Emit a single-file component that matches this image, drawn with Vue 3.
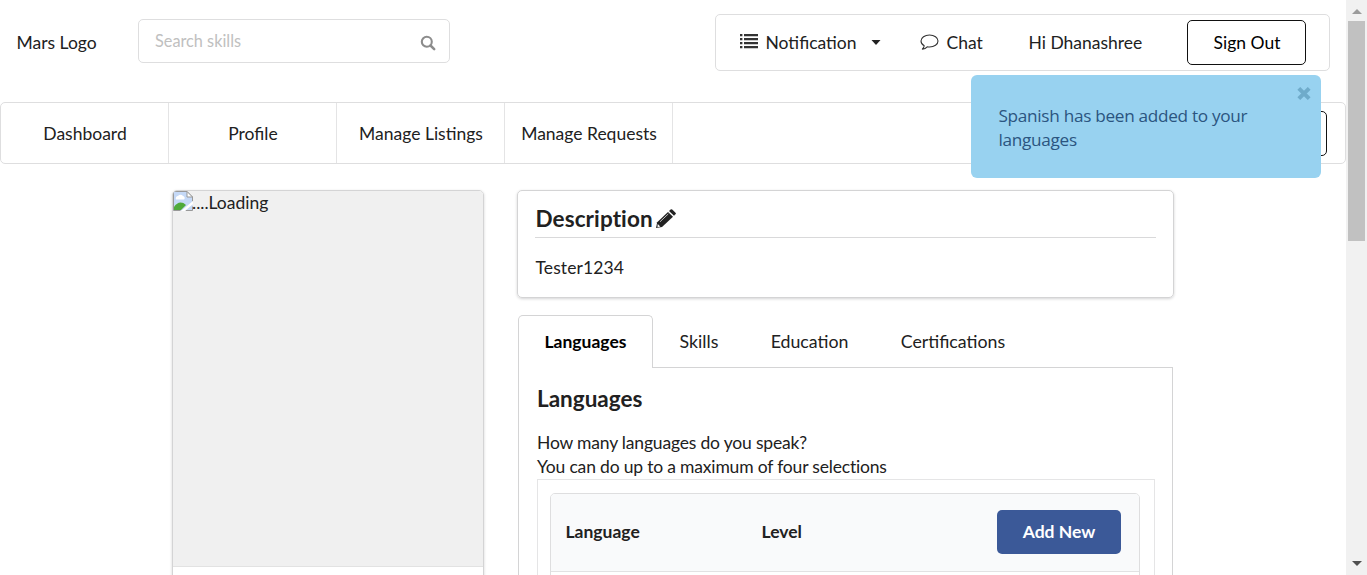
<script setup>
const navItems = ['Dashboard', 'Profile', 'Manage Listings', 'Manage Requests']
const tabs = ['Languages', 'Skills', 'Education', 'Certifications']
const activeTab = 'Languages'
</script>

<template>
  <div class="window">
    <main class="page">
      <header class="top">
        <span class="logo">Mars Logo</span>
        <div class="search">
          <span>Search skills</span>
          <svg width="16" height="16" viewBox="0 0 16 16" fill="none" stroke="#8c8c8c">
            <circle cx="6.8" cy="6.8" r="5" stroke-width="2.1" />
            <path d="M10.5 10.5 14.2 14.2" stroke-width="2.5" stroke-linecap="round" />
          </svg>
        </div>
        <div class="account">
          <svg class="list-icon" width="18" height="15" viewBox="0 0 18 15" fill="#333">
            <path d="M0 0h2.400v2.300H0zM4 0h14v2.300H4zM0 4h2.400v2.300H0zM4 4h14v2.300H4zM0 8h2.400v2.300H0zM4 8h14v2.300H4zM0 12h2.400v2.300H0zM4 12h14v2.300H4z" />
          </svg>
          <span class="notification">Notification</span>
          <svg class="caret" width="10" height="5" viewBox="0 0 10 5" fill="#222"><path d="M.5 0h9L5 5z" /></svg>
          <svg class="chat-icon" width="19" height="17" viewBox="0 0 19 17" fill="none" stroke="#333" stroke-width="1.1" stroke-linejoin="round">
            <path d="M9.5 1C4.8 1 1 3.6 1 7c0 2 1.3 3.7 3.2 4.8-.2 1.5-.9 2.5-1.8 3.4 2-.2 3.6-1 4.8-2.4.7.1 1.5.2 2.3.2 4.700 0 8.500-2.600 8.500-6S14.200 1 9.500 1z" />
          </svg>
          <span class="chat">Chat</span>
          <span class="greeting">Hi Dhanashree</span>
          <button class="outline sign-out">Sign Out</button>
        </div>
      </header>

      <nav class="nav">
        <a v-for="item in navItems" :key="item">{{ item }}</a>
        <button class="outline share"></button>
      </nav>

      <div class="content">
        <aside class="profile">
          <div class="photo">
            <svg width="20" height="20" viewBox="0 0 20 20">
              <path d="M.5.5h13.500l5.500 5.500v13.500H.5z" fill="#c5d9f7" />
              <path d="M3 8.500a2.400 2.400 0 0 1 2-3.500 3 3 0 0 1 5 0 2 2 0 0 1 1 3.500z" fill="#fff" />
              <path d="M1 19v-3c3-5 8-6 12-2l-5 5z" fill="#4faa3b" />
              <path d="M.5 19.500V.5h13.500l5.500 5.500v4.500M.5 19.500h7M12.500 19.500h7v-4" fill="none" stroke="#999" />
              <path d="M14 .5v5.500h5.500z" fill="#fff" stroke="#999" />
              <path d="M8 20 20 10v3l-8 7z" fill="#fff" />
            </svg>
            <span>....Loading</span>
          </div>
        </aside>

        <div class="details">
          <section class="description">
            <h3>
              <span>Description</span>
              <svg width="20" height="19" viewBox="0 0 20 19" fill="#222">
                <path d="M0 19 1.200 13.300 12 3l5 4.800L6 18z" />
                <path d="M13 2 14.600.5q.8-.7 1.600 0L19.500 3.700q.8.800 0 1.600L18 6.800z" />
                <path d="m1.700 15 2.600 2.500-2.800.7z" fill="#fff" />
                <path d="M4 12.800 12.300 4.900" stroke="#fff" stroke-width=".7" />
              </svg>
            </h3>
            <p>Tester1234</p>
          </section>

          <div class="tabs">
            <a v-for="tab in tabs" :key="tab" :class="{ active: tab === activeTab }">{{ tab }}</a>
          </div>
          <section class="panel">
            <h3>Languages</h3>
            <p>How many languages do you speak?<br />You can do up to a maximum of four selections</p>
            <div class="table-wrap">
              <div class="table">
                <div class="row">
                  <span class="language">Language</span>
                  <span class="level">Level</span>
                  <button class="add">Add New</button>
                </div>
              </div>
            </div>
          </section>
        </div>
      </div>
    </main>

    <div class="scrollbar">
      <svg width="10" height="5" viewBox="0 0 10 5" fill="#9b9b9b"><path d="M0 5h10L5 0z" /></svg>
      <div class="thumb"></div>
      <svg class="down" width="10" height="5" viewBox="0 0 10 5" fill="#505050"><path d="M0 0h10L5 5z" /></svg>
    </div>

    <div class="toast">
      Spanish has been added to your languages
      <svg class="close" width="14" height="13" viewBox="0 0 14 13" stroke="#6fabca" stroke-width="4">
        <path d="M1.800 1.400 12.200 11.600M12.200 1.400 1.800 11.600" />
      </svg>
    </div>
  </div>
</template>

<style>
body {
  overflow: hidden;
}
</style>

<style scoped>
* {
  box-sizing: border-box;
}
.window {
  position: relative;
  display: flex;
  height: 575px;
  overflow: hidden;
  background: #fff;
  color: #212121;
  font: 17.5px/24px Lato, sans-serif;
}
.page {
  width: 1346px;
  flex: none;
}
svg {
  display: block;
  flex: none;
}
h3,
p {
  margin: 0;
}
button {
  font: inherit;
  padding: 0;
}
.top {
  display: flex;
  height: 102px;
}
.logo {
  margin: 31px 0 0;
  padding-left: 16.5px;
  width: 138px;
}
.search {
  display: flex;
  justify-content: space-between;
  align-items: center;
  width: 312px;
  height: 44px;
  margin-top: 19px;
  padding: 0 13px 0 16px;
  border: 1px solid #dededf;
  border-radius: 5px;
  color: #c0c0c0;
  font-size: 16.3px;
}
.search svg {
  margin-top: 4px;
}
.account {
  display: flex;
  align-items: center;
  width: 615px;
  height: 57px;
  margin: 14px 0 0 265px;
  padding-left: 24px;
  border: 1px solid #dededf;
  border-radius: 5px;
}
.list-icon {
  margin-top: -3px;
}
.notification {
  width: 106px;
  margin-left: 7.5px;
}
.caret {
  margin-left: -0.5px;
}
.chat-icon {
  margin-left: 39px;
}
.chat {
  width: 82px;
  margin-left: 7px;
  padding-left: 0.5px;
}
.greeting {
  width: 159px;
  padding-left: 0.5px;
}
.outline {
  height: 45px;
  background: #fff;
  border: 1px solid #111;
  border-radius: 5px;
  color: #000;
}
.sign-out {
  width: 119px;
  padding-left: 1px;
}
.nav {
  display: flex;
  align-items: center;
  height: 62px;
  padding-right: 18px;
  border: 1px solid #dededf;
  border-radius: 5px;
}
.nav a {
  display: flex;
  align-items: center;
  justify-content: center;
  width: 168px;
  height: 60px;
  padding: 2px 0 0 1px;
  border-right: 1px solid #e4e4e5;
}
.share {
  width: 119px;
  margin: 0 0 0 auto;
}
.content {
  display: flex;
  align-items: flex-start;
  gap: 33px;
  padding: 26px 0 0 172px;
}
.profile {
  width: 312px;
  height: 480px;
  border: 1px solid #d4d4d5;
  border-radius: 5px;
  box-shadow: 0 1px 3px #d4d4d5;
  overflow: hidden;
}
.photo {
  display: flex;
  height: 376px;
  background: #f0f0f0;
  border-bottom: 1px solid #e2e2e2;
}
.photo span {
  margin-left: -1px;
}
.details {
  width: 657px;
}
.description {
  height: 108px;
  padding: 14px 17px 0;
  border: 1px solid #d4d4d5;
  border-radius: 5px;
  box-shadow: 0 1px 3px #d4d4d5;
}
h3 {
  font-size: 22.5px;
  line-height: 28px;
  font-weight: 700;
}
.description h3 {
  display: flex;
  align-items: center;
  gap: 3px;
  height: 33px;
  padding: 0 0 5px 0.5px;
  border-bottom: 1px solid #d9d9da;
  letter-spacing: 0.1px;
}
.description p {
  margin: 18px 0 0 0.5px;
  letter-spacing: 0.1px;
}
.tabs {
  position: relative;
  display: flex;
  height: 53px;
  margin: 17px 1px -1px;
}
.tabs a {
  display: flex;
  align-items: center;
  padding: 0 25.8px 2px 26.5px;
  font-size: 17.75px;
}
.tabs .active {
  width: 135px;
  justify-content: center;
  padding: 0 0 1px;
  background: #fff;
  border: 1px solid #d4d4d5;
  border-bottom: 0;
  border-radius: 5px 5px 0 0;
  color: #000;
  font-size: 17.5px;
  font-weight: 700;
}
.panel {
  width: 655px;
  height: 300px;
  margin-left: 1px;
  padding: 17px 17px 0 18px;
  border: 1px solid #d4d4d5;
}
.panel p {
  margin-top: 18px;
  letter-spacing: -0.18px;
}
.table-wrap {
  height: 200px;
  padding: 13px 14px 0 12px;
  border: 1px solid #e5e5e6;
}
.table {
  height: 180px;
  border: 1px solid #dededf;
  border-radius: 5px;
  overflow: hidden;
}
.row {
  display: flex;
  align-items: center;
  height: 78px;
  padding: 0 0 2px 14.5px;
  background: #f9fafb;
  border-bottom: 1px solid #e2e2e3;
  font-weight: 700;
}
.language {
  width: 196px;
}
.level {
  width: 235.5px;
}
.add {
  width: 124px;
  height: 44px;
  border: 0;
  border-radius: 5px;
  background: #3b5998;
  color: #fff;
}
.scrollbar {
  display: flex;
  flex-direction: column;
  align-items: center;
  width: 21px;
  padding: 9px 0;
  background: #f1f1f1;
}
.thumb {
  width: 17px;
  height: 220px;
  margin-top: 7px;
  background: #c1c1c1;
}
.down {
  margin-top: auto;
}
.toast {
  position: absolute;
  left: 971px;
  top: 75px;
  width: 350px;
  height: 103px;
  padding: 29px 60px 0 27.5px;
  border-radius: 6px;
  background: #98d2f0;
  color: #2b5580;
  font: 17.2px/24px "Open Sans", sans-serif;
  letter-spacing: -0.3px;
}
.close {
  position: absolute;
  top: 12px;
  right: 10px;
}
</style>
